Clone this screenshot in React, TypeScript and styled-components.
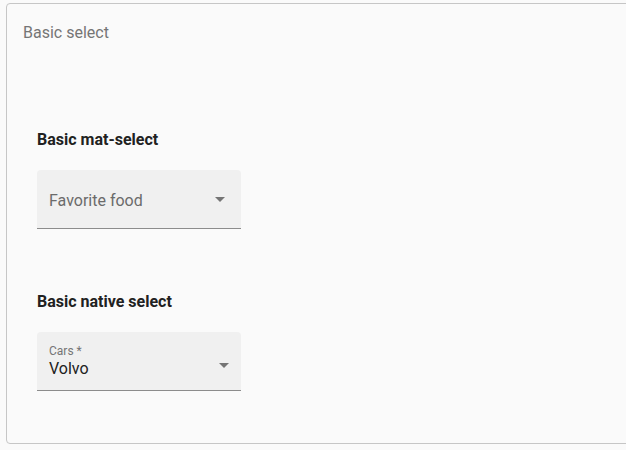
import React from "react";
import styled, { createGlobalStyle } from "styled-components";

const Global = createGlobalStyle`
  html, body { margin: 0; padding: 0; background: #fafafa; }
  body { font-family: Roboto, "Noto Sans", sans-serif; overflow: hidden; }
`;

const Card = styled.div`
  margin: 3px 0 0 6px;
  width: 640px;
  height: 439px;
  border: 1px solid #c6c6c6;
  border-radius: 4px;
  background: #fafafa;
`;

const Title = styled.div`
  padding: 17px 0 0 16px;
  font-size: 16px;
  line-height: 24px;
  color: #757575;
`;

const Body = styled.div`
  display: flex;
  flex-direction: column;
  padding: 85px 0 0 30px;
`;

const Section = styled.section<{ $gap?: number }>`
  display: flex;
  flex-direction: column;
  margin-bottom: ${(p) => p.$gap ?? 0}px;
`;

const Heading = styled.h3`
  margin: 0 0 20px 0;
  font-size: 16px;
  line-height: 20px;
  font-weight: 700;
  color: #212121;
`;

const Field = styled.div`
  position: relative;
  width: 204px;
  height: 59px;
  box-sizing: border-box;
  background: #f0f0f0;
  border-radius: 4px 4px 0 0;
  border-bottom: 1px solid #8c8c8c;
  display: flex;
  flex-direction: column;
  justify-content: center;
  padding: 0 12px;
`;

const Placeholder = styled.div`
  font-size: 16px;
  line-height: 20px;
  color: #6b6b6b;
  margin-top: 4px;
`;

const Label = styled.div`
  font-size: 12px;
  line-height: 14px;
  color: #757575;
  margin-top: 1px;
`;

const Value = styled.div`
  font-size: 16px;
  line-height: 20px;
  color: #212121;
  margin-top: 1px;
`;

const Arrow = styled.span<{ $right: number; $top: number }>`
  position: absolute;
  right: ${(p) => p.$right}px;
  top: ${(p) => p.$top}px;
  width: 0;
  height: 0;
  border-left: 5px solid transparent;
  border-right: 5px solid transparent;
  border-top: 5px solid #757575;
`;

export default function App() {
  return (
    <>
      <Global />
      <Card>
        <Title>Basic select</Title>
        <Body>
          <Section $gap={63}>
            <Heading>Basic mat-select</Heading>
            <Field>
              <Placeholder>Favorite food</Placeholder>
              <Arrow $right={16} $top={27} />
            </Field>
          </Section>
          <Section>
            <Heading>Basic native select</Heading>
            <Field>
              <Label>Cars *</Label>
              <Value>Volvo</Value>
              <Arrow $right={12} $top={31} />
            </Field>
          </Section>
        </Body>
      </Card>
    </>
  );
}
